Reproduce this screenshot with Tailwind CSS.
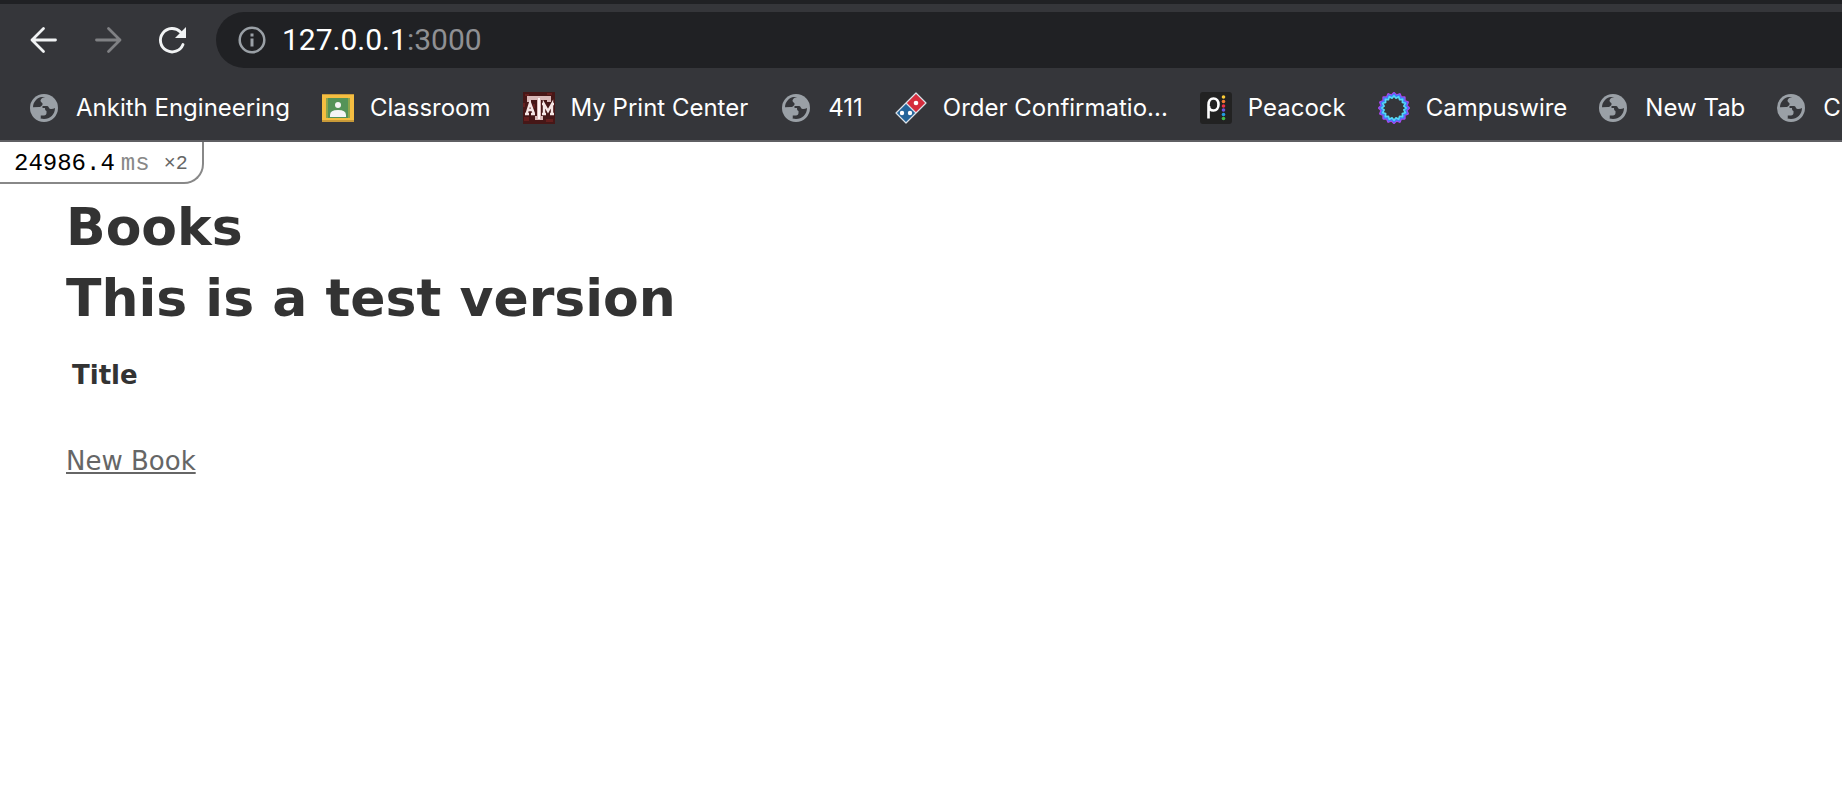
<!DOCTYPE html>
<html lang="en">
<head>
<meta charset="utf-8">
<title>Books</title>
<script src="https://cdn.jsdelivr.net/npm/@tailwindcss/browser@4"></script>
</head>
<body class="min-h-screen overflow-x-hidden bg-white font-['DejaVu_Sans',sans-serif] text-[26px] leading-9 text-[#333]">
<svg class="hidden">
  <symbol id="globe" viewBox="0 0 28 28">
    <circle cx="14" cy="14" r="14" fill="#9aa0a6"/>
    <path d="M16 3 C14 3 11 4 10.500 6.500 C10.500 8 12 8.500 12.500 9.500 C13 11 11 13 9 13 L3 13.500 C3 8 7 3.500 12 3 Z M25 14 C25 20.500 20 25 14 25 L10.500 24.500 L10.500 21.500 L14 21.500 C15.500 21.500 16.500 20.500 16.500 19 L16.500 17 C15 16.500 15 15 15 14 L12.500 14 L12.500 12 L17 12 C18.500 12 18.500 13 19 14 C20 15.500 23 15 25 14 Z" fill="#35363a"/>
    <path d="M3 13.500 L9 13.500 C12 13.500 14 14.500 14 17 L14 18.500 L10.500 18.500 L10.500 24.500 C6 23 3 19 3 13.500Z" fill="#9aa0a6"/>
  </symbol>
</svg>
<header class="border-b-2 border-t-4 border-b-[#5f5f63] border-t-[#202124] bg-[#35363a] font-['Inter',sans-serif] text-white">
  <div class="flex h-18 items-center">
    <nav class="flex shrink-0 gap-8 pr-7 pl-7" aria-label="Browser controls">
      <button class="size-8" aria-label="Back"><svg viewBox="0 0 32 32" fill="none" stroke="#f1f3f4" stroke-width="2.800" stroke-linecap="round" stroke-linejoin="round"><path d="M27.500 16H4M15.500 4.500L4 16L15.500 27.500"/></svg></button>
      <button class="size-8" aria-label="Forward"><svg viewBox="0 0 32 32" fill="none" stroke="#808184" stroke-width="2.800" stroke-linecap="round" stroke-linejoin="round"><path d="M4.500 16H28M16.500 4.500L28 16L16.500 27.500"/></svg></button>
      <button class="size-8" aria-label="Reload"><svg viewBox="0 0 32 32"><path d="M27 20.500A11.700 11.700 0 1 1 24.500 8" fill="none" stroke="#f1f3f4" stroke-width="2.900" stroke-linecap="round"/><path d="M30 3V14H19Z" fill="#f1f3f4"/></svg></button>
    </nav>
    <div class="flex h-14 grow items-center gap-4 rounded-l-full bg-[#202124] pl-[22px]">
      <button class="size-7 shrink-0" aria-label="Site information"><svg viewBox="0 0 28 28"><circle cx="14" cy="14" r="12.300" fill="none" stroke="#9aa0a6" stroke-width="2.500"/><path d="M12.500 7.500h3v3h-3zM12.500 12.500h3v8h-3z" fill="#9aa0a6"/></svg></button>
      <div role="textbox" aria-label="Address" class="font-['Roboto',sans-serif] text-[30px] leading-9 whitespace-nowrap">127.0.0.1<span class="text-[#8f9093]">:3000</span></div>
    </div>
  </div>
  <nav class="flex h-16 items-center gap-8 overflow-hidden pl-7 text-2xl whitespace-nowrap" aria-label="Bookmarks">
    <a href="#" class="flex shrink-0 items-center gap-4"><svg class="mx-0.5 size-7"><use href="#globe"/></svg>Ankith Engineering</a>
    <a href="#" class="flex shrink-0 items-center gap-4"><svg class="size-8" viewBox="0 0 32 32"><path d="M0 2h32v28H0z" fill="#c89a38"/><path d="M0 3h32v25H0z" fill="#f5be41"/><path d="M4 6h24v20H4z" fill="#8ea64b"/><path d="M6 6h20v20H6z" fill="#549358"/><circle cx="16" cy="13" r="3" fill="#f5f5f5"/><path d="M8 25V23Q8 18 16 18T24 23V25Z" fill="#f5f5f5"/></svg>Classroom</a>
    <a href="#" class="flex shrink-0 items-center gap-4"><svg class="size-8" viewBox="0 0 32 32"><path d="M0 0h32v32H0z" fill="#461717"/><path d="M2 2h4v2H2zM24 1h5v2h-5zM1 25h5v4H1zM23 27h7v3h-7zM0 11h2v4H0zM10 12h2v4h-2z" fill="#651f1e"/><path d="M6 10V6H26V10M16 6V26M12 26h8" fill="none" stroke="#d9b9b8" stroke-width="4"/><path d="M2 22h4M8 22h4M3.500 22L7 11L11 22M5 18h5M19 22h4M27 22h4M21 22V12L25 19L29 12V22M19 12h2M29 12h2" fill="none" stroke="#f5e6e5" stroke-width="2.400"/><path d="M16 6v21" stroke="#fff5f4" stroke-width="2"/></svg>My Print Center</a>
    <a href="#" class="flex shrink-0 items-center gap-4"><svg class="mx-0.5 size-7"><use href="#globe"/></svg>411</a>
    <a href="#" class="flex shrink-0 items-center gap-4"><svg class="size-8" viewBox="0 0 32 32"><path d="M11 11L21 1L31 11L21 21Z" fill="#d52c3c"/><path d="M11 11L21 21L11 31L1 21Z" fill="#23649a"/><path d="M21 1L31 11L11 31L1 21ZM11 11L21 21" fill="none" stroke="#dce3e9" stroke-width="1.200" stroke-linejoin="round"/><g fill="#fff"><circle cx="21" cy="11" r="2.300"/><circle cx="7" cy="21" r="2.200"/><circle cx="15" cy="21" r="2.200"/></g></svg>Order Confirmatio...</a>
    <a href="#" class="flex shrink-0 items-center gap-4"><svg class="size-8" viewBox="0 0 32 32"><rect width="32" height="32" rx="3" fill="#222"/><path d="M8.500 26.500V13C8.500 8.500 10.500 6.500 13.500 6.500S18.500 9 18.500 12.500S16.500 18.500 13.500 18.500S9 17 9 14" fill="none" stroke="#fff" stroke-width="2.600"/><circle cx="23.500" cy="5" r="1.800" fill="#fccc38"/><circle cx="23.500" cy="9.500" r="1.800" fill="#f37a32"/><circle cx="23.500" cy="14" r="1.800" fill="#ee3048"/><circle cx="23.500" cy="18" r="1.800" fill="#6e55dc"/><circle cx="23.500" cy="22.500" r="1.800" fill="#229ade"/><circle cx="23.500" cy="26.500" r="1.800" fill="#45b94a"/></svg>Peacock</a>
    <div class="flex shrink-0 gap-[30px]">
      <a href="#" class="flex shrink-0 items-center gap-4"><svg class="size-8" viewBox="-16 -16 32 32" fill="none" stroke-linejoin="round"><path id="ringOuter" stroke="#a944ee" stroke-width="2.200"/><path id="ringMiddle" stroke="#3d80f7" stroke-width="2.400"/><path id="ringInner" stroke="#55d8f5" stroke-width="1.600"/></svg>Campuswire</a>
      <a href="#" class="flex shrink-0 items-center gap-4"><svg class="mx-0.5 size-7"><use href="#globe"/></svg>New Tab</a>
      <a href="#" class="flex shrink-0 items-center gap-4"><svg class="mx-0.5 size-7"><use href="#globe"/></svg>C</a>
    </div>
  </nav>
</header>
<div class="relative">
  <button class="absolute top-0 left-0 flex h-[42px] items-center rounded-br-[20px] border-r-2 border-b-2 border-[#888] bg-white pt-1 pr-3.5 pl-3.5 font-['Liberation_Mono',monospace] text-2xl text-black"><span>24986.4</span><span class="ml-1.5 text-[#888]">ms</span><span class="ml-3.5 text-xl text-[#666]">×2</span></button>
  <main class="px-[66px] pt-[50px]">
    <h1 class="text-[52px] leading-[71px] font-bold">Books</h1>
    <h1 class="text-[52px] leading-[71px] font-bold">This is a test version</h1>
    <table class="mt-[19px]"><thead><tr><th scope="col" class="px-1.5 py-1 text-left font-bold">Title</th></tr></thead><tbody></tbody></table>
    <a href="#" class="mt-[46px] inline-block text-[#666] underline decoration-2 underline-offset-2">New Book</a>
  </main>
</div>
<script>
  // Scalloped rings of the Campuswire logo
  function ring(id, inner, outer) {
    let d = "";
    for (let i = 0; i < 32; i++) {
      const r = i % 2 ? inner : outer, a = i * Math.PI / 16;
      d += (i ? "L" : "M") + (r * Math.sin(a)) + " " + (-r * Math.cos(a));
    }
    document.getElementById(id).setAttribute("d", d + "Z");
  }
  ring("ringOuter", 12.7, 15);
  ring("ringMiddle", 11.3, 13.4);
  ring("ringInner", 10, 12.2);
</script>
</body>
</html>
